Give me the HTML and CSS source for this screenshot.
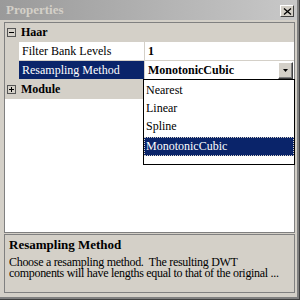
FILE: index.html
```html
<!DOCTYPE html>
<html lang="en">
<head>
    <meta charset="UTF-8">
    <title>Properties</title>
    <link rel="stylesheet" href="styles.css">
</head>
<body>
    <div class="window">
        <div class="titlebar">
            <span class="title">Properties</span>
            <span class="close">
                <svg width="9" height="7" viewBox="0 0 9 7"><path d="M1 0.5 L8 6.5 M8 0.5 L1 6.5" stroke="#000" stroke-width="1.3" fill="none"/></svg>
            </span>
        </div>

        <div class="grid">
            <div class="row category">
                <span class="toggle"><svg width="9" height="9" viewBox="0 0 9 9"><rect x="0.5" y="0.5" width="8" height="8" fill="none" stroke="#555"/><path d="M2 4.5 H7" stroke="#000"/></svg></span>
                <span class="cat-name">Haar</span>
            </div>
            <div class="row item">
                <span class="gutter"></span>
                <span class="name">Filter Bank Levels</span>
                <span class="value">1</span>
            </div>
            <div class="row item selected">
                <span class="gutter"></span>
                <span class="name">Resampling Method</span>
                <span class="value">MonotonicCubic<span class="drop-btn"><svg width="5" height="3" viewBox="0 0 5 3"><path d="M0 0 H5 L2.5 3 Z" fill="#000"/></svg></span></span>
            </div>
            <div class="row category">
                <span class="toggle"><svg width="9" height="9" viewBox="0 0 9 9"><rect x="0.5" y="0.5" width="8" height="8" fill="none" stroke="#555"/><path d="M2 4.5 H7 M4.5 2 V7" stroke="#000"/></svg></span>
                <span class="cat-name">Module</span>
            </div>

            <ul class="dropdown">
                <li>Nearest</li>
                <li>Linear</li>
                <li>Spline</li>
                <li class="current">MonotonicCubic</li>
            </ul>
        </div>

        <div class="help">
            <div class="help-title">Resampling Method</div>
            <div class="help-text">Choose a resampling method.&nbsp; The resulting DWT components will have lengths equal to that of the original ...</div>
        </div>
    </div>
</body>
</html>
```

FILE: styles.css
```css
/* Win2000-style property grid */
body {
    margin: 0;
    font-family: 'Liberation Serif', serif;
    font-size: 12px;
    color: #000;
}

.window {
    width: 300px;
    height: 300px;
    box-sizing: border-box;
    background: #d4d0c8;
    box-shadow: inset -1px -1px 0 #404040, inset -3px -3px 0 #808080;
    overflow: hidden;
}

.titlebar {
    height: 20px;
    margin-right: 3px;
    background: linear-gradient(to right, #9a9a9a, #c8c8c8);
    display: flex;
    align-items: center;
    justify-content: space-between;
    padding: 0 3px 0 6px;
}

.title {
    color: #d4d0c8;
    font-weight: bold;
    font-size: 13px;
}

.close {
    width: 12px;
    height: 10px;
    margin-top: 2px;
    background: #d4d0c8;
    border: 1px solid;
    border-color: #fff #404040 #404040 #fff;
    display: flex;
    align-items: center;
    justify-content: center;
}

.grid {
    position: relative;
    margin: 2px 5px 0 4px;
    height: 209px;
    background: #fff;
    border: 1px solid #808080;
}

.row {
    height: 18px;
    display: flex;
    align-items: center;
    border-bottom: 1px solid #d4d0c8;
}

.category {
    background: #d4d0c8;
    font-weight: bold;
}

.toggle {
    width: 9px;
    height: 9px;
    margin: 0 5px 0 2px;
    display: flex;
}

.gutter {
    width: 14px;
    height: 100%;
    background: #d4d0c8;
}

.name {
    width: 122px;
    height: 100%;
    padding-left: 3px;
    display: flex;
    align-items: center;
    border-right: 1px solid #d4d0c8;
}

.value {
    flex: 1;
    height: 100%;
    padding-left: 3px;
    font-weight: bold;
    display: flex;
    align-items: center;
    justify-content: space-between;
}

.selected .name {
    background: #0a246a;
    color: #fff;
}

.drop-btn {
    width: 15px;
    height: 17px;
    margin-right: 1px;
    box-sizing: border-box;
    background: #d4d0c8;
    border: 1px solid;
    border-color: #fff #404040 #404040 #fff;
    box-shadow: inset -1px -1px 0 #808080;
    display: flex;
    align-items: center;
    justify-content: center;
}

.dropdown {
    position: absolute;
    left: 138px;
    top: 56px;
    width: 150px;
    height: 83px;
    margin: 0;
    padding: 1px 0 0;
    list-style: none;
    background: #fff;
    border: 1px solid #000;
}

.dropdown li {
    height: 18px;
    line-height: 18px;
    padding-left: 2px;
}

.dropdown li.current {
    margin-top: 2px;
    height: 19px;
    line-height: 19px;
    background: #0a246a;
    color: #fff;
    outline: 1px dotted #d4d0c8;
    outline-offset: -1px;
}

.help {
    margin: 1px 5px 0 4px;
    height: 59px;
    box-sizing: border-box;
    border: 1px solid #808080;
    padding: 2px 4px;
}

.help-title {
    font-weight: bold;
    font-size: 13px;
    line-height: 16px;
    margin-bottom: 4px;
}

.help-text {
    width: 280px;
    line-height: 11px;
    letter-spacing: -0.3px;
}
```
